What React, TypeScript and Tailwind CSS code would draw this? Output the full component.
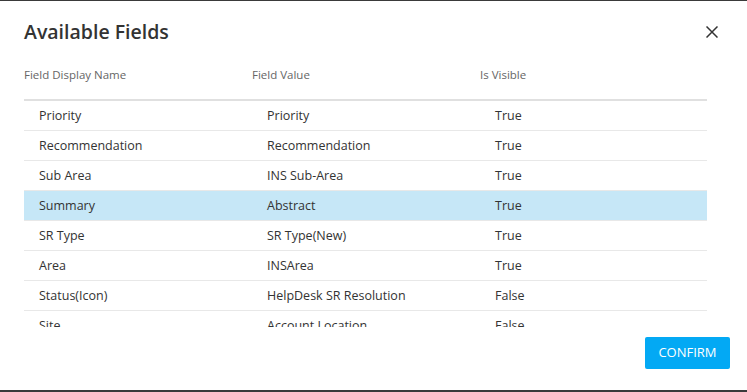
import React from 'react'

const rows = [
  ['Priority', 'Priority', 'True'],
  ['Recommendation', 'Recommendation', 'True'],
  ['Sub Area', 'INS Sub-Area', 'True'],
  ['Summary', 'Abstract', 'True'],
  ['SR Type', 'SR Type(New)', 'True'],
  ['Area', 'INSArea', 'True'],
  ['Status(Icon)', 'HelpDesk SR Resolution', 'False'],
  ['Site', 'Account Location', 'False'],
]

export default function App() {
  return (
    <div className="h-[392px] w-[747px] bg-white border-t border-b-2 border-t-[#3a3a3a] border-b-[#3a3a3a] font-['Open_Sans',sans-serif] text-[#333] flex flex-col">
      {/* Header */}
      <div className="flex items-start justify-between pl-6 pr-[29px] pt-[17px] h-[61px]">
        <h2 className="text-[19.5px] leading-[28px] font-semibold text-[#333]">Available Fields</h2>
        <button className="mt-[8px] text-[#333]">
          <svg width="12" height="12" viewBox="0 0 12 12" fill="none" stroke="currentColor" strokeWidth="1.5">
            <path d="M0.5 0.5l11 11M11.5 0.5l-11 11" />
          </svg>
        </button>
      </div>

      {/* Table */}
      <div className="mx-6 w-[683px]">
        <div className="grid grid-cols-[228px_228px_227px] h-[39px] pt-[5px] leading-[16px] text-[11.5px] text-[#666] border-b-2 border-[#e0e0e0]">
          <div>Field Display Name</div>
          <div>Field Value</div>
          <div>Is Visible</div>
        </div>
        <div className="h-[226px] overflow-hidden">
          {rows.map((r, i) => (
            <div
              key={i}
              className={
                'grid grid-cols-[228px_228px_227px] h-[30px] pt-px items-center text-[12.5px] border-b border-[#e8e8e8] ' +
                (r[0] === 'Summary' ? 'bg-[#c6e7f7]' : '')
              }
            >
              <div className="pl-[15px]">{r[0]}</div>
              <div className="pl-[15px]">{r[1]}</div>
              <div className="pl-[15px]">{r[2]}</div>
            </div>
          ))}
        </div>
      </div>

      {/* Footer */}
      <div className="flex justify-end pr-[17px] pt-[10px]">
        <button className="h-[32px] w-[85px] rounded-[2px] bg-[#03a9f4] text-white text-[13px]">CONFIRM</button>
      </div>
    </div>
  )
}
